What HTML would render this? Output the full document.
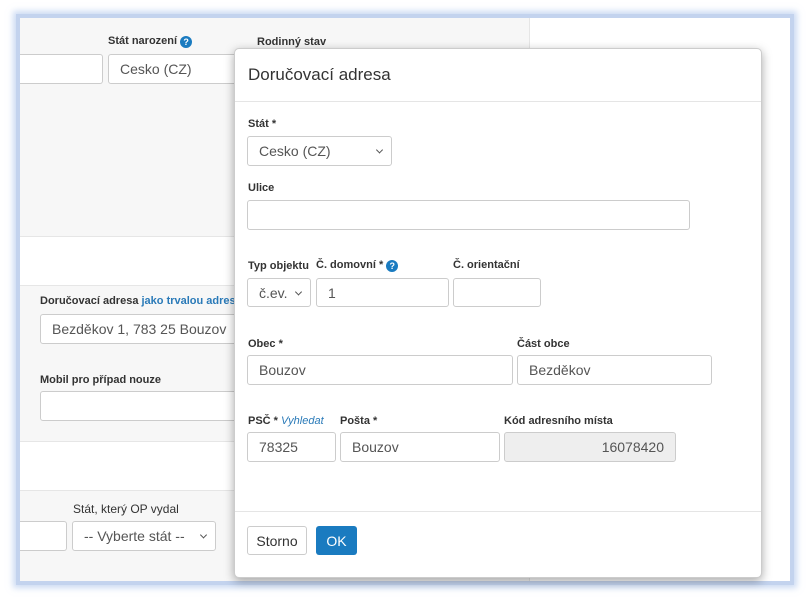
<!DOCTYPE html>
<html><head><meta charset="utf-8"><style>
*{box-sizing:border-box;margin:0;padding:0}
body{width:809px;height:598px;background:#fff;font-family:"Liberation Sans",sans-serif;position:relative;overflow:hidden;color:#333}
.a{position:absolute}
.frame{left:16px;top:14px;width:778px;height:571px;border:4px solid #c3d3ee;box-shadow:0 0 6px 3px rgba(170,195,235,.6)}
.lbl{position:absolute;font-size:11px;font-weight:bold;color:#333;white-space:nowrap}
.inp{position:absolute;border:1px solid #ccc;border-radius:3px;background:#fff;font-size:14px;color:#555;padding:0 11px;display:flex;align-items:center;line-height:1}
.sel::after{content:"";position:absolute;right:9px;top:50%;width:4px;height:4px;border-right:1px solid #555;border-bottom:1px solid #555;transform:translateY(-70%) rotate(45deg)}
.q{display:inline-block;width:12px;height:12px;border-radius:50%;background:#1a7bc0;color:#fff;font-size:9px;text-align:center;line-height:12px;vertical-align:-1px;font-weight:bold}
.hl{position:absolute;height:1px;background:#e5e5e5}
</style></head><body>
<div class="a frame"></div>
<div class="a" style="left:20px;top:18px;width:510px;height:218px;background:#f7f7f7;border-right:1px solid #e6e6e6"></div>
<div class="a" style="left:20px;top:285px;width:510px;height:157px;background:#f7f7f7;border-top:1px solid #e6e6e6;border-bottom:1px solid #e6e6e6;border-right:1px solid #e6e6e6"></div>
<div class="a" style="left:20px;top:236px;width:510px;height:1px;background:#e6e6e6"></div>
<div class="a" style="left:20px;top:490px;width:510px;height:91px;background:#f7f7f7;border-top:1px solid #e6e6e6;border-right:1px solid #e6e6e6"></div>

<div class="lbl" style="left:108px;top:35px">Stát narození <span class="q">?</span></div>
<div class="lbl" style="left:257px;top:36px">Rodinný stav</div>
<div class="inp" style="left:20px;top:54px;width:83px;height:30px;border-left:none;border-radius:0 3px 3px 0"></div>
<div class="inp" style="left:108px;top:54px;width:140px;height:30px">Cesko (CZ)</div>
<div class="lbl" style="left:40px;top:295px">Doručovací adresa <span style="color:#2a7ab8;font-weight:bold">jako trvalou adresu</span></div>
<div class="inp" style="left:40px;top:314px;width:210px;height:30px">Bezděkov 1, 783 25 Bouzov</div>
<div class="lbl" style="left:40px;top:374px">Mobil pro případ nouze</div>
<div class="inp" style="left:40px;top:391px;width:210px;height:30px"></div>
<div class="lbl" style="left:73px;top:502px;font-weight:normal;font-size:12px">Stát, který OP vydal</div>
<div class="inp" style="left:20px;top:521px;width:47px;height:30px;border-left:none;border-radius:0 3px 3px 0"></div>
<div class="inp sel" style="left:72px;top:521px;width:144px;height:30px">-- Vyberte stát --</div>

<div class="a" style="left:234px;top:48px;width:528px;height:530px;background:#fff;border-radius:5px;box-shadow:0 3px 10px rgba(0,0,0,.35);border:1px solid #ccc"></div>
<div class="a" style="left:248px;top:65px;font-size:17px;color:#333">Doručovací adresa</div>
<div class="hl" style="left:235px;top:101px;width:526px"></div>
<div class="lbl" style="left:248px;top:118px">Stát *</div>
<div class="inp sel" style="left:247px;top:136px;width:145px;height:30px">Cesko (CZ)</div>
<div class="lbl" style="left:248px;top:182px">Ulice</div>
<div class="inp" style="left:247px;top:200px;width:443px;height:30px"></div>
<div class="lbl" style="left:248px;top:260px">Typ objektu</div>
<div class="lbl" style="left:316px;top:259px">Č. domovní * <span class="q">?</span></div>
<div class="lbl" style="left:453px;top:259px">Č. orientační</div>
<div class="inp sel" style="left:247px;top:278px;width:64px;height:29px">č.ev.</div>
<div class="inp" style="left:316px;top:278px;width:133px;height:29px">1</div>
<div class="inp" style="left:453px;top:278px;width:88px;height:29px"></div>
<div class="lbl" style="left:248px;top:338px">Obec *</div>
<div class="lbl" style="left:517px;top:338px">Část obce</div>
<div class="inp" style="left:247px;top:355px;width:266px;height:30px">Bouzov</div>
<div class="inp" style="left:517px;top:355px;width:195px;height:30px">Bezděkov</div>
<div class="lbl" style="left:248px;top:415px">PSČ * <i style="color:#2a7ab8;font-weight:normal">Vyhledat</i></div>
<div class="lbl" style="left:340px;top:415px">Pošta *</div>
<div class="lbl" style="left:504px;top:415px">Kód adresního místa</div>
<div class="inp" style="left:247px;top:432px;width:89px;height:30px">78325</div>
<div class="inp" style="left:340px;top:432px;width:160px;height:30px">Bouzov</div>
<div class="inp" style="left:504px;top:432px;width:172px;height:30px;background:#eee;justify-content:flex-end">16078420</div>
<div class="hl" style="left:235px;top:511px;width:526px"></div>
<div class="inp" style="left:247px;top:526px;width:60px;height:29px;color:#333;justify-content:center;padding:0">Storno</div>
<div class="a" style="left:316px;top:526px;width:41px;height:29px;background:#1a7bc0;border-radius:3px;color:#fff;font-size:14px;display:flex;align-items:center;justify-content:center">OK</div>
</body></html>
